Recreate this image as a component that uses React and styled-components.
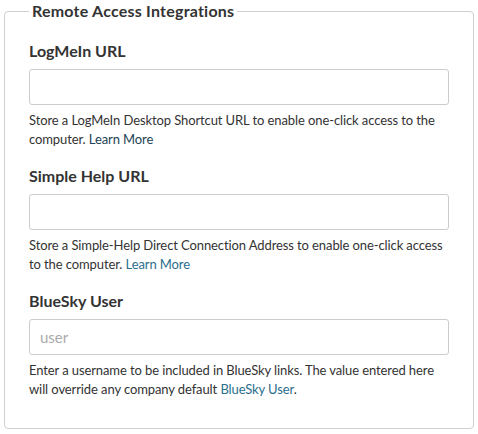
import React from "react";
import styled, { createGlobalStyle } from "styled-components";

const GlobalStyle = createGlobalStyle`
  html, body {
    margin: 0;
    padding: 0;
    background: #fff;
  }
  body {
    font-family: Lato, "Open Sans", "Liberation Sans", sans-serif;
    color: #333;
  }
`;

const fields = [
  {
    label: "LogMeIn URL",
    text: "Store a LogMeIn Desktop Shortcut URL to enable one-click access to the computer.",
    link: "Learn More",
    visited: true,
  },
  {
    label: "Simple Help URL",
    text: "Store a Simple-Help Direct Connection Address to enable one-click access to the computer.",
    link: "Learn More",
  },
  {
    label: "BlueSky User",
    placeholder: "user",
    text: "Enter a username to be included in BlueSky links. The value entered here will override any company default",
    link: "BlueSky User",
    after: ".",
  },
];

function App() {
  return (
    <>
      <GlobalStyle />
      <Fieldset>
        <Legend>Remote Access Integrations</Legend>
        {fields.map((f) => (
          <FormGroup key={f.label}>
            <Label>{f.label}</Label>
            <Input type="text" placeholder={f.placeholder || ""} />
            <HelpBlock>
              {f.text} <HelpLink href="#" $visited={f.visited}>{f.link}</HelpLink>
              {f.after}
            </HelpBlock>
          </FormGroup>
        ))}
      </Fieldset>
    </>
  );
}

export default App;

const Fieldset = styled.fieldset`
  margin: 0 4px;
  padding: 18px 24px 30px;
  border: 1px solid #cfcfcf;
  border-radius: 4px;
  min-width: 0;
`;

const Legend = styled.legend`
  padding: 0 3px;
  font-size: 16px;
  line-height: 22px;
  font-weight: 700;
  letter-spacing: 0.22px;
  color: #333;
`;

const FormGroup = styled.div`
  margin-bottom: 17px;
  &:last-of-type {
    margin-bottom: 0;
  }
`;

const Label = styled.label`
  display: block;
  font-size: 16px;
  line-height: 22px;
  font-weight: 700;
  color: #333;
  margin-bottom: 7px;
`;

const Input = styled.input`
  display: block;
  box-sizing: border-box;
  width: 100%;
  height: 36px;
  padding: 0 10px;
  border: 1px solid #cccccc;
  border-radius: 3px;
  font-family: inherit;
  font-size: 15px;
  color: #333;
  background: #fff;
  outline: none;

  &::placeholder {
    color: #aaa;
  }
`;

const HelpBlock = styled.p`
  margin: 6px 0 0;
  font-size: 13px;
  line-height: 18.57px;
  letter-spacing: -0.1px;
  color: #333;
`;

const HelpLink = styled.a`
  color: ${(p) => (p.$visited ? "#1d4354" : "#2a6e8c")};
  text-decoration: none;
`;
